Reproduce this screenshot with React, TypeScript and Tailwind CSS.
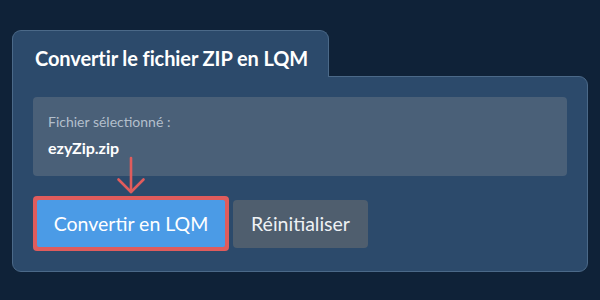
import React from 'react';

function DownArrow() {
  return (
    <svg width="30" height="40" viewBox="0 0 30 40" fill="none" className="absolute left-[83px] top-[-42px]">
      <path d="M15 4 V38" stroke="#e05c5c" strokeWidth="2.6" strokeLinecap="round" />
      <path d="M2.5 25.5 L15 38 L27.5 25.5" stroke="#e05c5c" strokeWidth="2.6" strokeLinecap="round" strokeLinejoin="round" />
    </svg>
  );
}

export default function App() {
  return (
    <div className="w-[600px] h-[300px] bg-[#0f2238] pt-[30px] px-[12px]" style={{ fontFamily: 'Lato, "Noto Sans", sans-serif' }}>
      {/* Tab */}
      <div className="relative z-10 -mb-px w-[317px] h-[47px] rounded-t-[9px] border border-b-0 border-[#4b6988] bg-[#2c4a6b] pl-[22px] pt-[12px]">
        <span className="text-[20px] font-bold text-white tracking-[-0.1px]">Convertir le fichier ZIP en LQM</span>
      </div>

      {/* Panel */}
      <div className="h-[196px] rounded-b-[9px] rounded-tr-[9px] border border-[#4b6988] bg-[#2c4a6b] px-[20px] pt-[20px]">
        <div className="h-[79px] rounded-[4px] bg-[#4a6078] px-[15px] pt-[16px]">
          <div className="text-[14px] text-[#b3bfcc] leading-[18px]">Fichier sélectionné :</div>
          <div className="mt-[8px] text-[16px] font-bold text-white leading-[18px]">ezyZip.zip</div>
        </div>

        <div className="relative mt-[20px] flex items-center gap-[4px]">
          <DownArrow />
          <div className="rounded-[4px] bg-[#e05c5c] p-[4px]">
            <button className="w-[188px] h-[47px] rounded-[2px] bg-[#4b9be6] text-[19.5px] text-white">Convertir en LQM</button>
          </div>
          <button className="w-[135px] h-[48px] rounded-[4px] bg-[#4f5e6e] text-[19.5px] text-[#eef1f4]">Réinitialiser</button>
        </div>
      </div>
    </div>
  );
}
